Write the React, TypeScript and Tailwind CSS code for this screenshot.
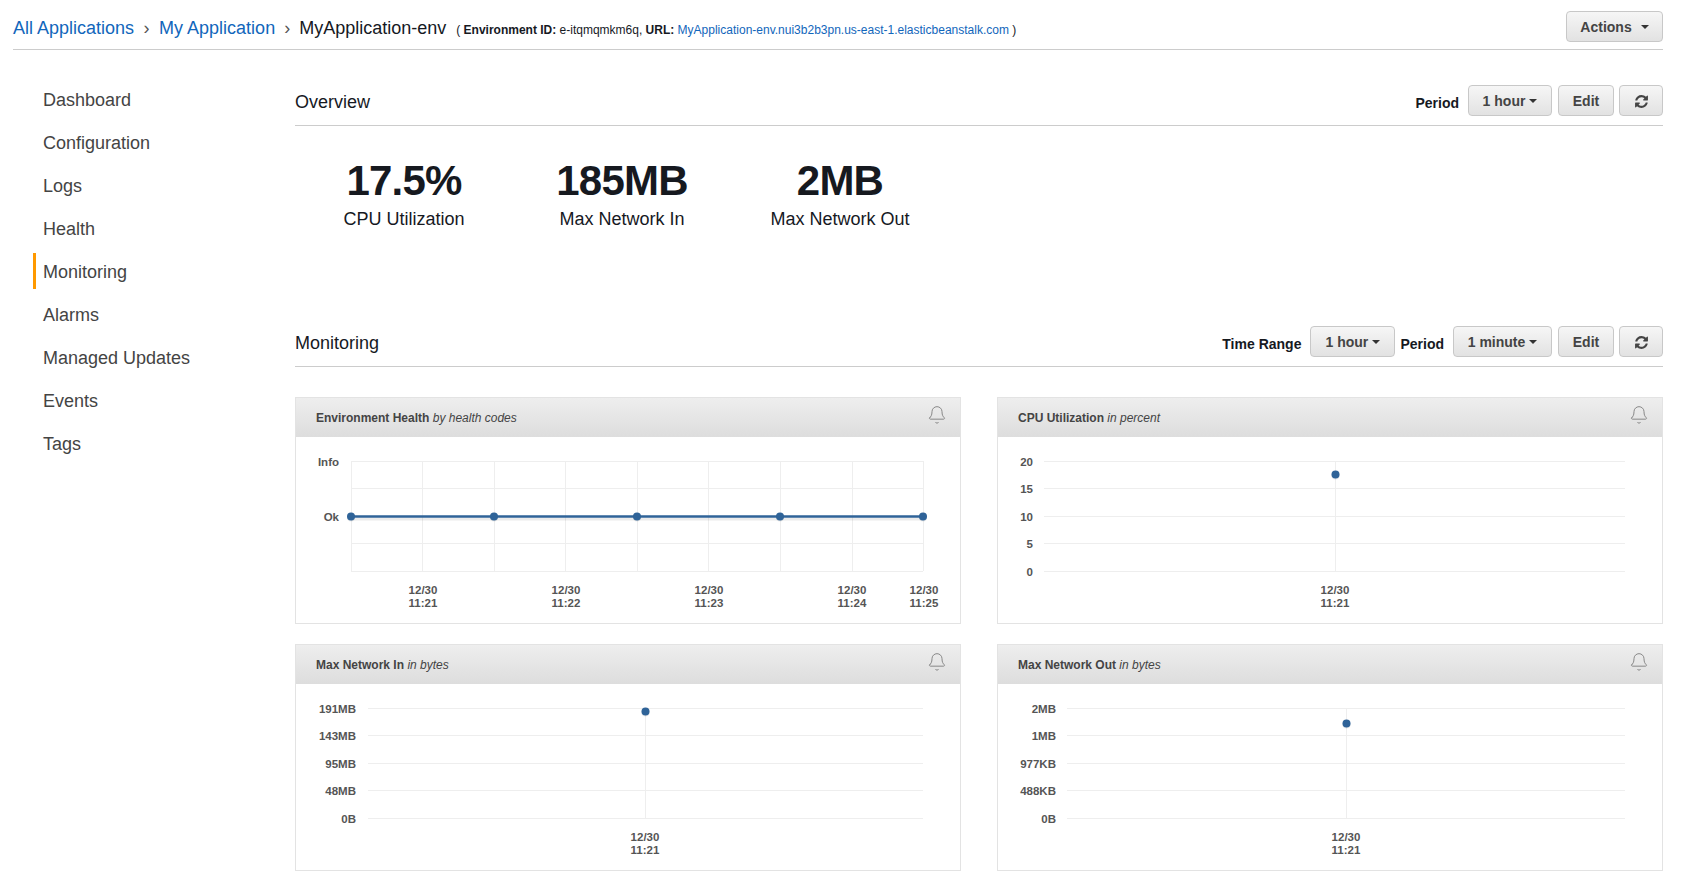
import { Bell } from "lucide-react";

const navItems = ["Dashboard", "Configuration", "Logs", "Health", "Monitoring", "Alarms", "Managed Updates", "Events", "Tags"];

const stats = [
  { value: "17.5%", label: "CPU Utilization" },
  { value: "185MB", label: "Max Network In" },
  { value: "2MB", label: "Max Network Out" },
];

const rows = [24, 51, 79, 106, 134];

type ChartProps = {
  left: number;
  labelX: number;
  yLabels: { text: string; y: number }[];
  vLines: number[];
  points: { x: number; y: number }[];
  ticks: { x: number; date: string; time: string }[];
  line?: boolean;
};

function Chart({ left, labelX, yLabels, vLines, points, ticks, line }: ChartProps) {
  return (
    <svg className="block w-full h-[186px]" viewBox="0 0 664 186">
      {rows.map((y) => (
        <line key={y} x1={left} x2={627} y1={y + 0.5} y2={y + 0.5} stroke="#eeeeee" />
      ))}
      {vLines.map((x) => (
        <line key={x} x1={x + 0.5} x2={x + 0.5} y1={24} y2={134} stroke="#eeeeee" />
      ))}
      {yLabels.map((l) => (
        <text key={l.text} x={labelX} y={l.y + 5} textAnchor="end" fontSize="11.5" fontWeight="700" fill="#555555">
          {l.text}
        </text>
      ))}
      {line && (
        <>
          <line x1={points[0].x} x2={points[points.length - 1].x} y1={82} y2={82} stroke="#000000" strokeOpacity="0.08" strokeWidth="3" />
          <line x1={points[0].x} x2={points[points.length - 1].x} y1={79.5} y2={79.5} stroke="#2f6398" strokeWidth="2.5" />
        </>
      )}
      {points.map((p) => (
        <g key={p.x}>
          <circle cx={p.x} cy={p.y + 1} r="4" fill="#000000" fillOpacity="0.08" />
          <circle cx={p.x} cy={p.y} r="4" fill="#2f6398" />
        </g>
      ))}
      {ticks.map((t) => (
        <text key={t.x} textAnchor="middle" fontSize="11.5" fontWeight="700" fill="#555555">
          <tspan x={t.x} y={157}>{t.date}</tspan>
          <tspan x={t.x} y={170}>{t.time}</tspan>
        </text>
      ))}
    </svg>
  );
}

function Panel({ title, unit, children }: { title: string; unit: string; children: React.ReactNode }) {
  return (
    <div className="border border-[#e3e3e3] bg-white">
      <div className="h-[39px] flex items-center justify-between pl-5 pr-[13px] bg-gradient-to-b from-[#eeeeee] to-[#dddddd]">
        <div className="text-[12px] text-[#444444]">
          <span className="font-bold">{title}</span> <span className="italic">{unit}</span>
        </div>
        <Bell className="w-[20px] h-[20px] mb-[5px] text-[#888888]" strokeWidth={1.2} />
      </div>
      {children}
    </div>
  );
}

function Btn({ children, caret, className }: { children?: React.ReactNode; caret?: boolean; className: string }) {
  return (
    <button className={`h-[31px] flex items-center justify-center gap-[4px] pt-[1px] rounded-[4px] border border-[#c8c8c8] bg-gradient-to-b from-[#f6f6f6] to-[#e2e2e2] text-[14px] font-bold text-[#444444] ${className}`}>
      {children}
      {caret && <span className="border-x-[4px] border-t-[4px] border-x-transparent border-t-[#333333]" />}
    </button>
  );
}

function RefreshIcon() {
  return (
    <svg className="w-[15px] h-[15px]" viewBox="0 0 1792 1792" fill="currentColor">
      <path d="M1639 1056q0 5-1 7-64 268-268 434.5t-478 166.5q-146 0-282.5-55t-243.5-157l-129 129q-19 19-45 19t-45-19-19-45v-448q0-26 19-45t45-19h448q26 0 45 19t19 45-19 45l-137 137q71 66 161 102t187 36q134 0 250-65t186-179q11-17 53-117 8-23 30-23h192q13 0 22.5 9.5t9.5 22.5zm25-800v448q0 26-19 45t-45 19h-448q-26 0-45-19t-19-45 19-45l138-138q-148-137-349-137-134 0-250 65t-186 179q-11 17-53 117-8 23-30 23h-199q-13 0-22.5-9.5t-9.5-22.5v-7q65-268 270-434.5t480-166.5q146 0 284 55.5t245 156.5l130-129q19-19 45-19t45 19 19 45z" />
    </svg>
  );
}

function SectionHead({ title, children }: { title: string; children: React.ReactNode }) {
  return (
    <div className="flex items-center justify-between pb-[9px] border-b border-[#cccccc]">
      <h2 className="text-[18px] text-[#16191f] pt-[3px]">{title}</h2>
      <div className="flex items-center">{children}</div>
    </div>
  );
}

function Label({ children, className }: { children: React.ReactNode; className: string }) {
  return <span className={`text-[14px] font-bold text-[#16191f] pt-[6px] ${className}`}>{children}</span>;
}

export default function App() {
  return (
    <div className="min-h-[893px] bg-white pl-[13px] pr-[19px] font-['Liberation_Sans',Arial,sans-serif] overflow-hidden">
      {/* Breadcrumb bar */}
      <header className="h-[50px] flex items-center justify-between pt-[4px] border-b border-[#cccccc]">
        <div className="flex items-center pt-[3px] text-[18px] whitespace-nowrap">
          <a className="text-[#1166bb]">All Applications</a>
          <span className="w-[25px] text-center text-[#555555]">›</span>
          <a className="text-[#1166bb]">My Application</a>
          <span className="w-[24px] text-center text-[#555555]">›</span>
          <span className="text-[#16191f]">MyApplication-env</span>
          <span className="ml-[10px] text-[12px] text-[#16191f] pt-[3px]">
            ( <b>Environment ID:</b> e-itqmqmkm6q, <b>URL:</b> <a className="text-[#1166bb]">MyApplication-env.nui3b2b3pn.us-east-1.elasticbeanstalk.com</a> )
          </span>
        </div>
        <Btn caret className="w-[97px] gap-[9px]">Actions</Btn>
      </header>

      <div className="flex">
        {/* Side nav */}
        <nav className="w-[282px] shrink-0 pl-[20px] pt-[27px]">
          {navItems.map((item) => (
            <div key={item} className="h-[43px] flex items-center">
              <span className={`h-[36px] flex items-center pt-[3px] text-[18px] text-[#444444] border-l-[3px] pl-[7px] ${item === "Monitoring" ? "border-[#ff9900]" : "border-transparent"}`}>
                {item}
              </span>
            </div>
          ))}
        </nav>

        <main className="flex-1 pt-[35px]">
          <SectionHead title="Overview">
            <Label className="mr-[9px]">Period</Label>
            <Btn caret className="w-[84px]">1 hour</Btn>
            <Btn className="w-[56px] ml-[6px]">Edit</Btn>
            <Btn className="w-[44px] ml-[5px]"><RefreshIcon /></Btn>
          </SectionHead>

          <div className="h-[200px] flex items-start pt-[31px]">
            {stats.map((s) => (
              <div key={s.label} className="w-[218px] text-center text-[#16191f]">
                <div className="text-[42px] leading-[48px] font-bold tracking-[-0.8px]">{s.value}</div>
                <div className="text-[18px] leading-[24px] mt-[2px]">{s.label}</div>
              </div>
            ))}
          </div>

          <SectionHead title="Monitoring">
            <Label className="mr-[9px]">Time Range</Label>
            <Btn caret className="w-[85px]">1 hour</Btn>
            <Label className="ml-[5px] mr-[9px]">Period</Label>
            <Btn caret className="w-[99px]">1 minute</Btn>
            <Btn className="w-[56px] ml-[6px]">Edit</Btn>
            <Btn className="w-[44px] ml-[5px]"><RefreshIcon /></Btn>
          </SectionHead>

          <div className="grid grid-cols-2 gap-x-[36px] gap-y-[20px] mt-[30px]">
            <Panel title="Environment Health" unit="by health codes">
              <Chart
                left={55}
                labelX={43}
                line
                yLabels={[{ text: "Info", y: 24 }, { text: "Ok", y: 79 }]}
                vLines={[55, 126, 198, 269, 341, 412, 484, 556, 627]}
                points={[55, 198, 341, 484, 627].map((x) => ({ x, y: 79.5 }))}
                ticks={[
                  { x: 127, date: "12/30", time: "11:21" },
                  { x: 270, date: "12/30", time: "11:22" },
                  { x: 413, date: "12/30", time: "11:23" },
                  { x: 556, date: "12/30", time: "11:24" },
                  { x: 628, date: "12/30", time: "11:25" },
                ]}
              />
            </Panel>
            <Panel title="CPU Utilization" unit="in percent">
              <Chart
                left={46}
                labelX={35}
                yLabels={["20", "15", "10", "5", "0"].map((text, i) => ({ text, y: rows[i] }))}
                vLines={[337]}
                points={[{ x: 337.5, y: 37.5 }]}
                ticks={[{ x: 337, date: "12/30", time: "11:21" }]}
              />
            </Panel>
            <Panel title="Max Network In" unit="in bytes">
              <Chart
                left={72}
                labelX={60}
                yLabels={["191MB", "143MB", "95MB", "48MB", "0B"].map((text, i) => ({ text, y: rows[i] }))}
                vLines={[349]}
                points={[{ x: 349.5, y: 27.5 }]}
                ticks={[{ x: 349, date: "12/30", time: "11:21" }]}
              />
            </Panel>
            <Panel title="Max Network Out" unit="in bytes">
              <Chart
                left={69}
                labelX={58}
                yLabels={["2MB", "1MB", "977KB", "488KB", "0B"].map((text, i) => ({ text, y: rows[i] }))}
                vLines={[348]}
                points={[{ x: 348.5, y: 39.5 }]}
                ticks={[{ x: 348, date: "12/30", time: "11:21" }]}
              />
            </Panel>
          </div>
        </main>
      </div>
    </div>
  );
}
